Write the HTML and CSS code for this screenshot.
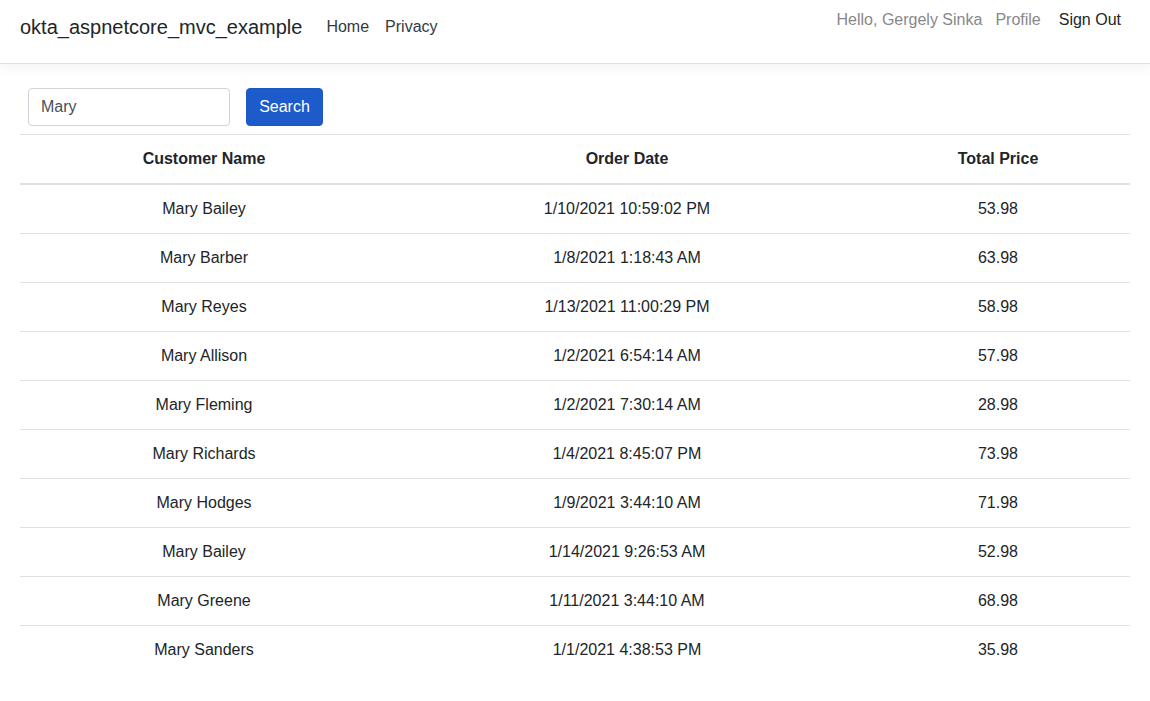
FILE: index.html
```html
<!DOCTYPE html>
<html>
<head>
<meta charset="utf-8">
<link rel="stylesheet" href="styles.css">
</head>
<body>
<header class="topbar">
  <div class="left">
    <a class="brand" href="#">okta_aspnetcore_mvc_example</a>
    <nav class="nav">
      <a class="nav-link" href="#">Home</a>
      <a class="nav-link" href="#">Privacy</a>
    </nav>
  </div>
  <div class="right">
    <span class="muted">Hello, Gergely Sinka</span>
    <a class="muted profile" href="#">Profile</a>
    <a class="signout" href="#">Sign Out</a>
  </div>
</header>
<main class="main">
  <form class="search">
    <input class="search-input" type="text" value="Mary">
    <button class="btn" type="button">Search</button>
  </form>
  <table class="grid">
    <colgroup><col class="c1"><col class="c2"><col class="c3"></colgroup>
    <thead>
      <tr><th>Customer Name</th><th>Order Date</th><th>Total Price</th></tr>
    </thead>
    <tbody>
      <tr><td>Mary Bailey</td><td>1/10/2021 10:59:02 PM</td><td>53.98</td></tr>
      <tr><td>Mary Barber</td><td>1/8/2021 1:18:43 AM</td><td>63.98</td></tr>
      <tr><td>Mary Reyes</td><td>1/13/2021 11:00:29 PM</td><td>58.98</td></tr>
      <tr><td>Mary Allison</td><td>1/2/2021 6:54:14 AM</td><td>57.98</td></tr>
      <tr><td>Mary Fleming</td><td>1/2/2021 7:30:14 AM</td><td>28.98</td></tr>
      <tr><td>Mary Richards</td><td>1/4/2021 8:45:07 PM</td><td>73.98</td></tr>
      <tr><td>Mary Hodges</td><td>1/9/2021 3:44:10 AM</td><td>71.98</td></tr>
      <tr><td>Mary Bailey</td><td>1/14/2021 9:26:53 AM</td><td>52.98</td></tr>
      <tr><td>Mary Greene</td><td>1/11/2021 3:44:10 AM</td><td>68.98</td></tr>
      <tr><td>Mary Sanders</td><td>1/1/2021 4:38:53 PM</td><td>35.98</td></tr>
    </tbody>
  </table>
</main>
</body>
</html>
```
FILE: styles.css
```css
* { box-sizing: border-box; }
html, body { margin: 0; padding: 0; }
body {
  font-family: "Liberation Sans", Arial, sans-serif;
  font-size: 16px;
  line-height: 24px;
  color: #212529;
  background: #fff;
}
a { text-decoration: none; }

.topbar {
  height: 64px;
  display: flex;
  justify-content: space-between;
  align-items: flex-start;
  padding: 0 29px 0 20px;
  border-bottom: 1px solid #dee2e6;
  box-shadow: 0 4px 12px rgba(0, 0, 0, 0.05);
}
.left {
  display: flex;
  align-items: center;
  height: 53px;
}
.brand {
  font-size: 20px;
  line-height: 30px;
  color: #212529;
  margin-right: 16px;
}
.nav { display: flex; }
.nav-link {
  color: #343a40;
  padding: 0 8px;
}
.right {
  display: flex;
  align-items: center;
  height: 39px;
}
.muted { color: #888; }
.profile { margin-left: 13px; }
.signout { margin-left: 18px; color: #212529; }

.main {
  padding: 24px 20px 0;
}
.search {
  display: flex;
  padding-left: 8px;
  margin-bottom: 8px;
}
.search-input {
  width: 202px;
  height: 38px;
  border: 1px solid #ced4da;
  border-radius: 4px;
  padding: 6px 12px;
  font-family: inherit;
  font-size: 16px;
  color: #495057;
  margin-right: 16px;
}
.btn {
  height: 38px;
  width: 77px;
  border: 1px solid #1a58c4;
  border-radius: 4px;
  background: #1c5bc9;
  color: #fff;
  font-family: inherit;
  font-size: 16px;
  padding: 6px 12px;
}

.grid {
  width: 100%;
  border-collapse: collapse;
  table-layout: fixed;
}
.c1 { width: 368px; }
.c2 { width: 478px; }
.c3 { width: 264px; }
.grid th, .grid td {
  text-align: center;
  padding: 12px;
  line-height: 24px;
  border-top: 1px solid #dee2e6;
}
.grid th {
  font-weight: bold;
  border-bottom: 2px solid #dee2e6;
}
.grid tbody tr:first-child td { border-top: 0; }
```
